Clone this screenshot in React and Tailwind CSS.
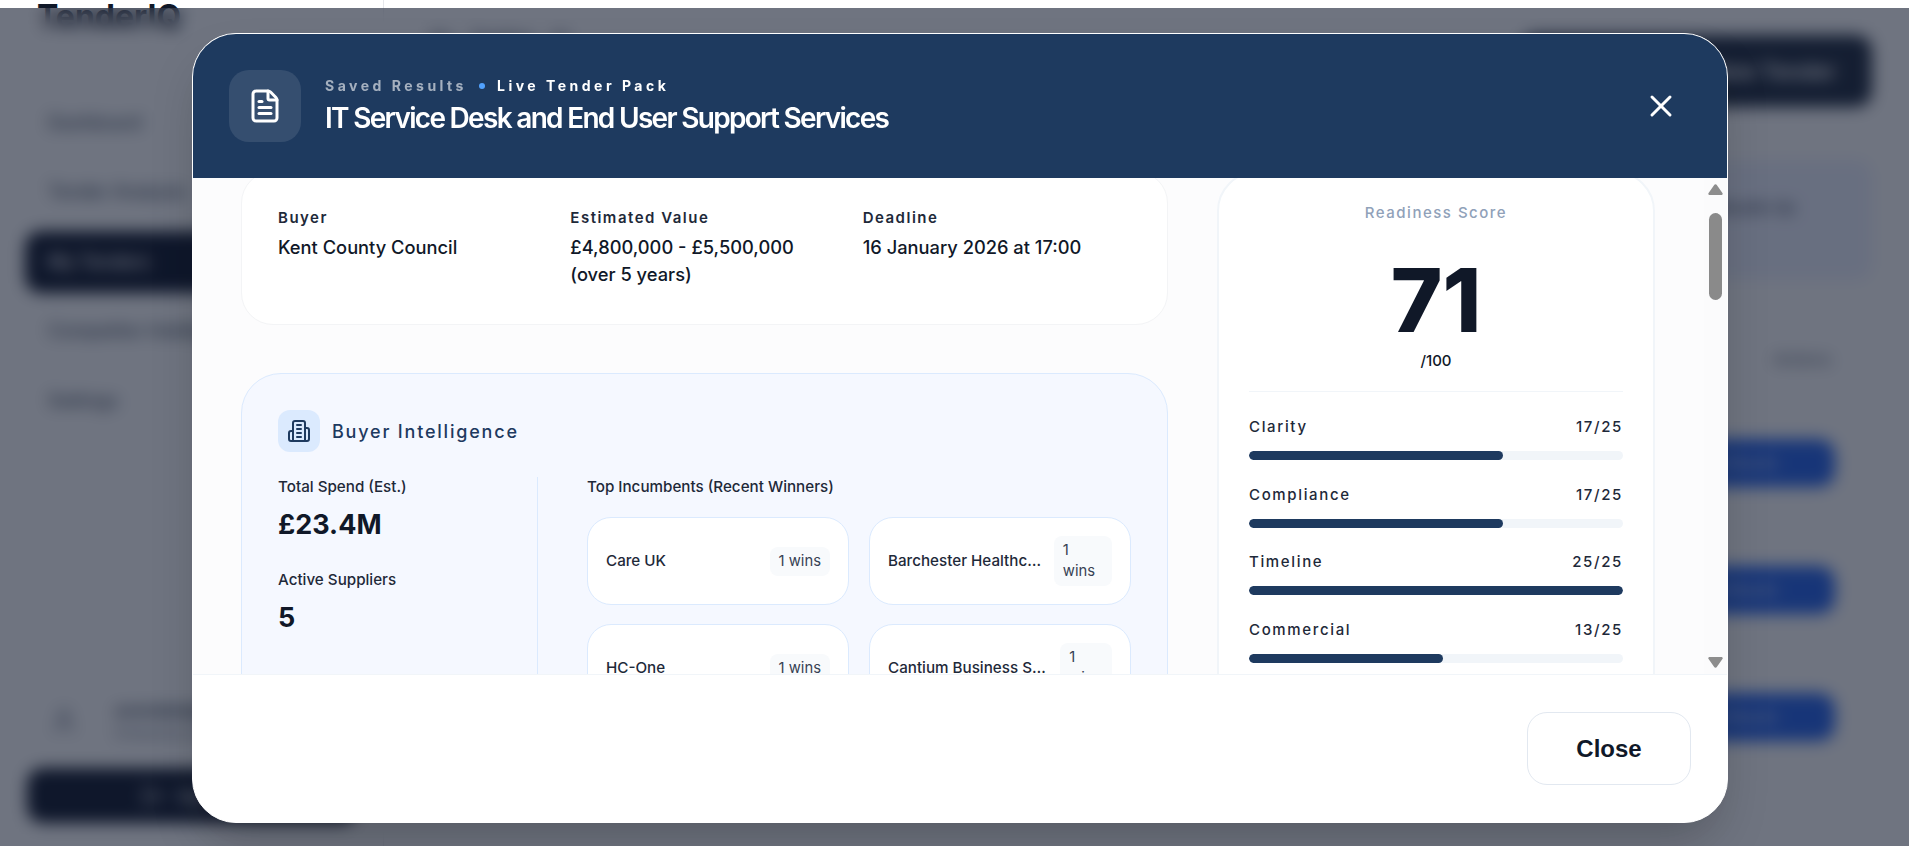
import { FileText, X, User, LogOut } from 'lucide-react';

const navItems = ['Dashboard', 'Tender Analysis', 'My Tenders', 'Competitor Intelligence', 'Settings'];

const scores = [
  { label: 'Clarity', value: 17, pct: '68%' },
  { label: 'Compliance', value: 17, pct: '68%' },
  { label: 'Timeline', value: 25, pct: '100%' },
  { label: 'Commercial', value: 13, pct: '52%' },
  { label: 'Risk', value: 19, pct: '76%' },
];

const incumbents = ['Care UK', 'Barchester Healthcare', 'HC-One', 'Cantium Business Solutions'];

const BuildingIcon = () => (
  <svg width="24" height="24" viewBox="0 0 24 24" fill="none" stroke="#1e3a5f" strokeWidth="2" strokeLinecap="round" strokeLinejoin="round">
    <path d="M6 22V4a2 2 0 0 1 2-2h8a2 2 0 0 1 2 2v18Z" />
    <path d="M6 12H4a2 2 0 0 0-2 2v6a2 2 0 0 0 2 2h2" />
    <path d="M18 9h2a2 2 0 0 1 2 2v9a2 2 0 0 1-2 2h-2" />
    <path d="M10 6h4" />
    <path d="M10 10h4" />
    <path d="M10 14h4" />
    <path d="M10 18h4" />
  </svg>
);

const Sidebar = () => (
  <aside className="flex h-full w-[384px] shrink-0 flex-col border-r border-gray-200 bg-white">
    <div className="-mt-[3px] pl-[37px] text-[32px] leading-[40px] font-bold text-gray-900">TenderIQ</div>
    <nav className="mt-[55px] flex flex-col gap-[7.4px] px-[25px]">
      {navItems.map((item) => (
        <div
          key={item}
          className={`flex h-[62px] items-center rounded-2xl pl-[23px] text-lg font-medium ${
            item === 'My Tenders' ? 'bg-slate-900 text-white' : 'text-gray-600'
          }`}
        >
          {item}
        </div>
      ))}
    </nav>
    <div className="mt-auto flex items-center gap-[37px] pl-[50px]">
      <User size={28} className="text-gray-500" />
      <div>
        <div className="text-base font-semibold text-gray-700">avondale@example</div>
        <div className="mt-[1px] text-sm text-gray-500">Enterprise plan</div>
      </div>
    </div>
    <div className="mx-[27px] mt-[25px] mb-[23px] flex h-[55px] w-[330px] items-center justify-center gap-3 rounded-2xl bg-slate-900 font-medium text-white">
      <LogOut size={22} /> Sign Out
    </div>
  </aside>
);

const MainBehind = () => (
  <main className="flex-1 pt-[35px] pr-[37px] pl-[46px]">
    <div className="flex items-center justify-between">
      <div className="-mt-[66px] flex gap-4 text-base font-medium text-gray-600">
        <span>My</span>
        <span className="font-bold">Tenders</span>
        <span>All</span>
      </div>
      <div className="flex h-[72px] w-[352px] items-center justify-end rounded-2xl bg-slate-800 pr-9 text-[22px] font-semibold text-white">
        New Tender
      </div>
    </div>
    <div className="mt-[53px] flex h-[120px] items-start justify-end rounded-2xl bg-indigo-50 pt-[35px] pr-[77px] font-medium text-gray-700">
      Results Up
    </div>
    <div className="mt-[40px] rounded-2xl border border-gray-100">
      <div className="flex h-[75px] items-center justify-end pr-[40px] text-base font-medium text-gray-500">Actions</div>
      <div className="mt-[43px] flex flex-col items-end gap-[79px]">
        {[0, 1, 2].map((i) => (
          <div key={i} className="mr-[36px] flex h-[48px] w-[200px] items-center justify-center rounded-2xl bg-[#2563eb] text-sm text-white">
            View Results
          </div>
        ))}
      </div>
    </div>
  </main>
);

const DetailItem = ({ label, value }) => (
  <div>
    <div className="mb-1.5 text-[15px] leading-5 font-semibold tracking-[0.1em] text-gray-800">{label}</div>
    <div className="text-[18.3px] leading-[27px] font-medium text-gray-900">{value}</div>
  </div>
);

const IncumbentCard = ({ name }) => (
  <div className="flex items-center justify-between gap-3 rounded-3xl border border-blue-100 bg-white p-[18px]">
    <span className="truncate text-[15.2px] font-medium text-gray-800">{name}</span>
    <span className="rounded-lg bg-slate-50 px-[9px] py-1 text-[14.8px] leading-[21px] text-gray-700">1 wins</span>
  </div>
);

const Scrollbar = () => (
  <div className="absolute inset-y-0 right-0 flex w-[23px] flex-col items-center bg-[#fbfbfc]">
    <svg width="15" height="11" viewBox="0 0 15 11" className="mt-[6px] shrink-0 fill-[#8d8d8d]">
      <path d="M6.2 1 .6 9a1.2 1.2 0 0 0 1 2h11.8a1.2 1.2 0 0 0 1-2L8.8 1a1.5 1.5 0 0 0-2.6 0Z" />
    </svg>
    <div className="mt-[18px] h-[87px] w-[13px] shrink-0 rounded-full bg-[#8a8a8a]" />
    <svg width="15" height="11" viewBox="0 0 15 11" className="mt-auto mb-[6px] shrink-0 rotate-180 fill-[#8d8d8d]">
      <path d="M6.2 1 .6 9a1.2 1.2 0 0 0 1 2h11.8a1.2 1.2 0 0 0 1-2L8.8 1a1.5 1.5 0 0 0-2.6 0Z" />
    </svg>
  </div>
);

const ResultsModal = () => (
  <div className="flex h-[790px] w-[1536px] flex-col overflow-hidden rounded-[44px] border border-white bg-white shadow-2xl">
    <header className="flex h-[144px] shrink-0 items-center bg-[#1e3a5f] pr-[48px] pl-[36px]">
      <div className="flex h-[72px] w-[72px] items-center justify-center rounded-[20px] bg-white/10">
        <FileText size={36} className="text-white" />
      </div>
      <div className="ml-[24px]">
        <div className="flex items-center text-sm leading-5 font-bold tracking-[0.25em] text-white/60">
          <span>Saved Results</span>
          <span className="mr-3 ml-3 h-1.5 w-1.5 rounded-full bg-blue-400" />
          <span className="text-white">Live Tender Pack</span>
        </div>
        <h2 className="mt-[4px] text-[28px] leading-9 font-semibold tracking-[-1.7px] text-white">
          IT Service Desk and End User Support Services
        </h2>
      </div>
      <X size={36} className="ml-auto text-white" />
    </header>

    <div className="relative min-h-0 flex-1 overflow-hidden bg-[#fcfcfd]">
      <div className="-mt-[7px] flex items-start gap-[49px] pl-[48px]">
        <div className="flex w-[927px] shrink-0 flex-col gap-12">
          <section className="grid grid-cols-3 gap-6 rounded-[32px] border border-gray-100 bg-white p-9">
            <DetailItem label="Buyer" value="Kent County Council" />
            <DetailItem label="Estimated Value" value="£4,800,000 - £5,500,000 (over 5 years)" />
            <DetailItem label="Deadline" value="16 January 2026 at 17:00" />
          </section>

          <section className="rounded-[40px] border border-blue-100 bg-[#f5f8ff] p-9">
            <div className="mb-[25px] flex items-center gap-3">
              <div className="flex h-[42px] w-[42px] items-center justify-center rounded-xl bg-blue-100">
                <BuildingIcon />
              </div>
              <h3 className="pt-[1px] text-lg font-medium tracking-[0.1em] text-[#1e3a5f]">Buyer Intelligence</h3>
            </div>
            <div className="flex">
              <div className="w-[260px] shrink-0 border-r border-blue-100">
                <div className="text-[15.2px] leading-5 font-medium text-gray-800">Total Spend (Est.)</div>
                <div className="mt-[10px] text-[27px] leading-9 font-bold text-gray-900">£23.4M</div>
                <div className="mt-[27px] text-[15.2px] leading-5 font-medium text-gray-800">Active Suppliers</div>
                <div className="mt-[10px] text-[27px] leading-9 font-bold text-gray-900">5</div>
              </div>
              <div className="min-w-0 flex-1 pl-[49px]">
                <div className="mb-5 text-[15.2px] leading-5 font-medium text-gray-800">Top Incumbents (Recent Winners)</div>
                <div className="grid grid-cols-2 gap-x-5 gap-y-[19px]">
                  {incumbents.map((name) => (
                    <IncumbentCard key={name} name={name} />
                  ))}
                </div>
              </div>
            </div>
          </section>
        </div>

        <aside className="w-[438px] shrink-0 rounded-[40px] border-2 border-slate-100 bg-white px-[30px] pt-[30px] pb-[28px]">
          <div className="text-center text-[15px] leading-5 font-medium tracking-[0.1em] text-slate-400">Readiness Score</div>
          <div className="mt-[33px] text-center text-[88px] leading-[88px] font-extrabold text-gray-900">71</div>
          <div className="mt-[7px] text-center text-[15px] leading-5 font-medium text-gray-900">/100</div>
          <div className="mt-5 flex flex-col gap-[24.5px] border-t border-slate-100 pt-[25px]">
            {scores.map((s) => (
              <div key={s.label}>
                <div className="flex justify-between text-[15px] leading-5 font-medium tracking-[0.11em] text-gray-800">
                  <span>{s.label}</span>
                  <span>{s.value}/25</span>
                </div>
                <div className="mt-[14px] h-[9px] overflow-hidden rounded-full bg-slate-100">
                  <div className="h-full rounded-full bg-[#1e3a5f]" style={{ width: s.pct }} />
                </div>
              </div>
            ))}
          </div>
        </aside>
      </div>
      <Scrollbar />
    </div>

    <footer className="flex h-[148px] shrink-0 items-center justify-end border-t border-slate-100 bg-white pr-9">
      <button className="h-[73px] w-[164px] rounded-[20px] border border-slate-200 bg-white font-['Liberation_Sans'] text-2xl font-bold text-gray-900">
        Close
      </button>
    </footer>
  </div>
);

export default function App() {
  return (
    <div className="relative flex h-screen w-full overflow-hidden bg-white font-['Inter',sans-serif]">
      <Sidebar />
      <MainBehind />
      <div className="absolute inset-x-0 top-2 bottom-0 bg-slate-900/60 pt-[25px] pl-[192px] backdrop-blur-sm">
        <ResultsModal />
      </div>
    </div>
  );
}
